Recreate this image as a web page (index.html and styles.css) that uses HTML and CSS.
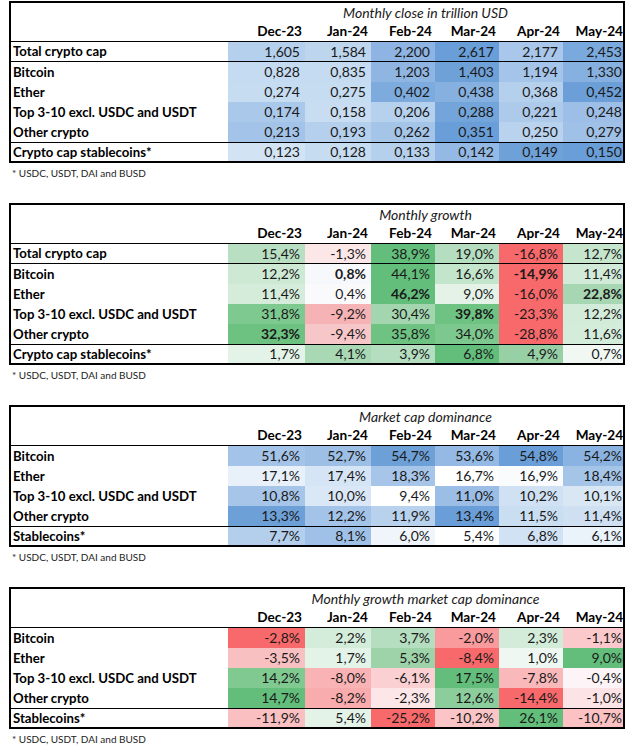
FILE: index.html
```html
<!DOCTYPE html>
<html>
<head>
<meta charset="utf-8">
<link rel="stylesheet" href="styles.css">
</head>
<body>
<div class="page">

<section class="block">
<table class="grid">
<colgroup><col class="c-label"><col class="c-dec"><col class="c-jan"><col class="c-mid"><col class="c-mid"><col class="c-mid"><col class="c-may"></colgroup>
<tr class="title-row"><td></td><td colspan="6" class="title">Monthly close in trillion USD</td></tr>
<tr class="head-row"><td></td><th>Dec-23</th><th>Jan-24</th><th>Feb-24</th><th>Mar-24</th><th>Apr-24</th><th class="last">May-24</th></tr>
<tr class="sep-below"><th>Total crypto cap</th><td style="background:#b4d0ec">1,605</td><td style="background:#bdd6ee">1,584</td><td style="background:#8db4e3">2,200</td><td style="background:#6a9ed8">2,617</td><td style="background:#a9c7ea">2,177</td><td class="last" style="background:#7aa9dd">2,453</td></tr>
<tr><th>Bitcoin</th><td style="background:#c5dbf1">0,828</td><td style="background:#c5dbf1">0,835</td><td style="background:#8fb6e3">1,203</td><td style="background:#6fa1d9">1,403</td><td style="background:#a5c4e9">1,194</td><td class="last" style="background:#86b0e0">1,330</td></tr>
<tr><th>Ether</th><td style="background:#c6dcf1">0,274</td><td style="background:#c6dcf1">0,275</td><td style="background:#7dabde">0,402</td><td style="background:#86b0e0">0,438</td><td style="background:#b4d0ec">0,368</td><td class="last" style="background:#6c9fd8">0,452</td></tr>
<tr><th>Top 3-10 excl. USDC and USDT</th><td style="background:#a9c8ea">0,174</td><td style="background:#c9ddf2">0,158</td><td style="background:#b5d1ed">0,206</td><td style="background:#74a5da">0,288</td><td style="background:#adcaeb">0,221</td><td class="last" style="background:#9dbfe7">0,248</td></tr>
<tr><th>Other crypto</th><td style="background:#a3c3e8">0,213</td><td style="background:#b5d0ed">0,193</td><td style="background:#a4c4e8">0,262</td><td style="background:#6a9ed8">0,351</td><td style="background:#b9d3ee">0,250</td><td class="last" style="background:#a0c1e7">0,279</td></tr>
<tr class="sep-above"><th>Crypto cap stablecoins*</th><td style="background:#d2e3f4">0,123</td><td style="background:#c6dcf1">0,128</td><td style="background:#b4d0ec">0,133</td><td style="background:#94b9e4">0,142</td><td style="background:#6fa1d9">0,149</td><td class="last" style="background:#6a9ed8">0,150</td></tr>
</table>
<p class="note">* USDC, USDT, DAI and BUSD</p>
</section>

<section class="block">
<table class="grid">
<colgroup><col class="c-label"><col class="c-dec"><col class="c-jan"><col class="c-mid"><col class="c-mid"><col class="c-mid"><col class="c-may"></colgroup>
<tr class="title-row"><td></td><td colspan="6" class="title">Monthly growth</td></tr>
<tr class="head-row"><td></td><th>Dec-23</th><th>Jan-24</th><th>Feb-24</th><th>Mar-24</th><th>Apr-24</th><th class="last">May-24</th></tr>
<tr class="sep-below"><th>Total crypto cap</th><td style="background:#b9dfc2">15,4%</td><td style="background:#fbe6e8">-1,3%</td><td style="background:#63be7b">38,9%</td><td style="background:#b5ddbf">19,0%</td><td style="background:#f8696b">-16,8%</td><td class="last" style="background:#c5e6cd">12,7%</td></tr>
<tr><th>Bitcoin</th><td style="background:#cde9d4">12,2%</td><td class="strong" style="background:#f6f8fb">0,8%</td><td style="background:#63be7b">44,1%</td><td style="background:#c3e5cb">16,6%</td><td class="strong" style="background:#f8696b">-14,9%</td><td class="last" style="background:#d2ebd8">11,4%</td></tr>
<tr><th>Ether</th><td style="background:#d5ecdb">11,4%</td><td style="background:#fafafd">0,4%</td><td class="strong" style="background:#63be7b">46,2%</td><td style="background:#e4f2e8">9,0%</td><td style="background:#f8696b">-16,0%</td><td class="last strong" style="background:#a6d6b2">22,8%</td></tr>
<tr><th>Top 3-10 excl. USDC and USDT</th><td style="background:#7ec98f">31,8%</td><td style="background:#f6b3b6">-9,2%</td><td style="background:#a3d5af">30,4%</td><td class="strong" style="background:#6ec282">39,8%</td><td style="background:#f8696b">-23,3%</td><td class="last" style="background:#d3ebd9">12,2%</td></tr>
<tr><th>Other crypto</th><td class="strong" style="background:#6dc281">32,3%</td><td style="background:#f7c6c8">-9,4%</td><td style="background:#6ec282">35,8%</td><td style="background:#7cc88e">34,0%</td><td style="background:#f8696b">-28,8%</td><td class="last" style="background:#d4ecda">11,6%</td></tr>
<tr class="sep-above"><th>Crypto cap stablecoins*</th><td style="background:#e4f3e8">1,7%</td><td style="background:#a9d8b4">4,1%</td><td style="background:#b5ddbf">3,9%</td><td style="background:#63be7b">6,8%</td><td style="background:#98d0a6">4,9%</td><td class="last" style="background:#f1f8f3">0,7%</td></tr>
</table>
<p class="note">* USDC, USDT, DAI and BUSD</p>
</section>

<section class="block">
<table class="grid">
<colgroup><col class="c-label"><col class="c-dec"><col class="c-jan"><col class="c-mid"><col class="c-mid"><col class="c-mid"><col class="c-may"></colgroup>
<tr class="title-row"><td></td><td colspan="6" class="title">Market cap dominance</td></tr>
<tr class="head-row"><td></td><th>Dec-23</th><th>Jan-24</th><th>Feb-24</th><th>Mar-24</th><th>Apr-24</th><th class="last">May-24</th></tr>
<tr><th>Bitcoin</th><td style="background:#a4c3e8">51,6%</td><td style="background:#9dbfe6">52,7%</td><td style="background:#6ea0d8">54,7%</td><td style="background:#94b9e4">53,6%</td><td style="background:#6a9ed8">54,8%</td><td class="last" style="background:#8bb3e1">54,2%</td></tr>
<tr><th>Ether</th><td style="background:#e8f0f9">17,1%</td><td style="background:#d6e5f5">17,4%</td><td style="background:#a6c5e9">18,3%</td><td style="background:#ffffff">16,7%</td><td style="background:#f9fbfd">16,9%</td><td class="last" style="background:#a4c4e8">18,4%</td></tr>
<tr><th>Top 3-10 excl. USDC and USDT</th><td style="background:#a6c5e9">10,8%</td><td style="background:#dae7f6">10,0%</td><td style="background:#ffffff">9,4%</td><td style="background:#9cbee6">11,0%</td><td style="background:#d0e1f3">10,2%</td><td class="last" style="background:#d9e7f5">10,1%</td></tr>
<tr><th>Other crypto</th><td style="background:#6ea0d8">13,3%</td><td style="background:#a4c3e8">12,2%</td><td style="background:#b8d2ee">11,9%</td><td style="background:#6a9ed8">13,4%</td><td style="background:#cadef2">11,5%</td><td class="last" style="background:#cfe0f3">11,4%</td></tr>
<tr class="sep-above"><th>Stablecoins*</th><td style="background:#b3cfec">7,7%</td><td style="background:#a0c1e7">8,1%</td><td style="background:#f0f5fb">6,0%</td><td style="background:#ffffff">5,4%</td><td style="background:#d1e2f4">6,8%</td><td class="last" style="background:#eaf2fa">6,1%</td></tr>
</table>
<p class="note">* USDC, USDT, DAI and BUSD</p>
</section>

<section class="block">
<table class="grid">
<colgroup><col class="c-label"><col class="c-dec"><col class="c-jan"><col class="c-mid"><col class="c-mid"><col class="c-mid"><col class="c-may"></colgroup>
<tr class="title-row"><td></td><td colspan="6" class="title">Monthly growth market cap dominance</td></tr>
<tr class="head-row"><td></td><th>Dec-23</th><th>Jan-24</th><th>Feb-24</th><th>Mar-24</th><th>Apr-24</th><th class="last">May-24</th></tr>
<tr><th>Bitcoin</th><td style="background:#f8696b">-2,8%</td><td style="background:#d4ecda">2,2%</td><td style="background:#b5ddbf">3,7%</td><td style="background:#f99b9d">-2,0%</td><td style="background:#d3ebd9">2,3%</td><td class="last" style="background:#fbc9cb">-1,1%</td></tr>
<tr><th>Ether</th><td style="background:#f9c0c2">-3,5%</td><td style="background:#e4f3e8">1,7%</td><td style="background:#9ed3aa">5,3%</td><td style="background:#f8696b">-8,4%</td><td style="background:#eef7f1">1,0%</td><td class="last" style="background:#63be7b">9,0%</td></tr>
<tr><th>Top 3-10 excl. USDC and USDT</th><td style="background:#80ca92">14,2%</td><td style="background:#f9b3b5">-8,0%</td><td style="background:#fbd0d2">-6,1%</td><td style="background:#63be7b">17,5%</td><td style="background:#f9b9bb">-7,8%</td><td class="last" style="background:#fcf4f6">-0,4%</td></tr>
<tr><th>Other crypto</th><td style="background:#63be7b">14,7%</td><td style="background:#f9acae">-8,2%</td><td style="background:#fce6e8">-2,3%</td><td style="background:#8ccd9c">12,6%</td><td style="background:#f8696b">-14,4%</td><td class="last" style="background:#fce3e5">-1,0%</td></tr>
<tr class="sep-above"><th>Stablecoins*</th><td style="background:#fabfc1">-11,9%</td><td style="background:#e4f3e8">5,4%</td><td style="background:#f8696b">-25,2%</td><td style="background:#fbc5c7">-10,2%</td><td style="background:#63be7b">26,1%</td><td class="last" style="background:#fbc1c3">-10,7%</td></tr>
</table>
<p class="note">* USDC, USDT, DAI and BUSD</p>
</section>

</div>
</body>
</html>
```
FILE: styles.css
```css
html, body {
  margin: 0;
  padding: 0;
  background: #ffffff;
}

.page {
  padding: 1px 0 0 9px;
  font-family: Lato, "Open Sans", sans-serif;
  color: #1a1a1a;
}

.block {
  margin: 0;
}

.grid {
  border: 2px solid #000;
  border-collapse: separate;
  border-spacing: 0;
  table-layout: fixed;
  width: 616px;
  font-size: 14px;
}

.c-label { width: 217px; }
.c-dec { width: 77px; }
.c-jan { width: 66px; }
.c-mid { width: 64px; }
.c-may { width: 60px; }

.grid td,
.grid th {
  padding: 0 5px 0 0;
  height: 20px;
  line-height: 20px;
  white-space: nowrap;
  text-align: right;
  font-weight: normal;
}

.grid tr > th:first-child {
  text-align: left;
  font-weight: bold;
  font-size: 13.2px;
  padding: 0 0 0 2px;
  color: #000;
}

.grid .head-row th {
  font-weight: bold;
  font-size: 13.6px;
  padding-right: 3px;
  color: #000;
}

.grid .head-row th.last { padding-right: 0; }
.grid td.last { padding-right: 1px; }

.grid .title-row td {
  height: 19px;
  line-height: 19px;
}

.grid .title {
  text-align: center;
  font-style: italic;
  padding: 0;
}

.grid .strong { font-weight: bold; }

.grid .head-row td,
.grid .head-row th,
.grid .sep-below td,
.grid .sep-below th {
  border-bottom: 1px solid #000;
  height: 19px;
  line-height: 19px;
}

.grid .sep-above td,
.grid .sep-above th {
  border-top: 1px solid #000;
  height: 18px;
  line-height: 18px;
}

.note {
  margin: 0;
  height: 40px;
  box-sizing: border-box;
  padding: 3px 0 0 3px;
  font-size: 10px;
  line-height: 14px;
  color: #222;
}
```
